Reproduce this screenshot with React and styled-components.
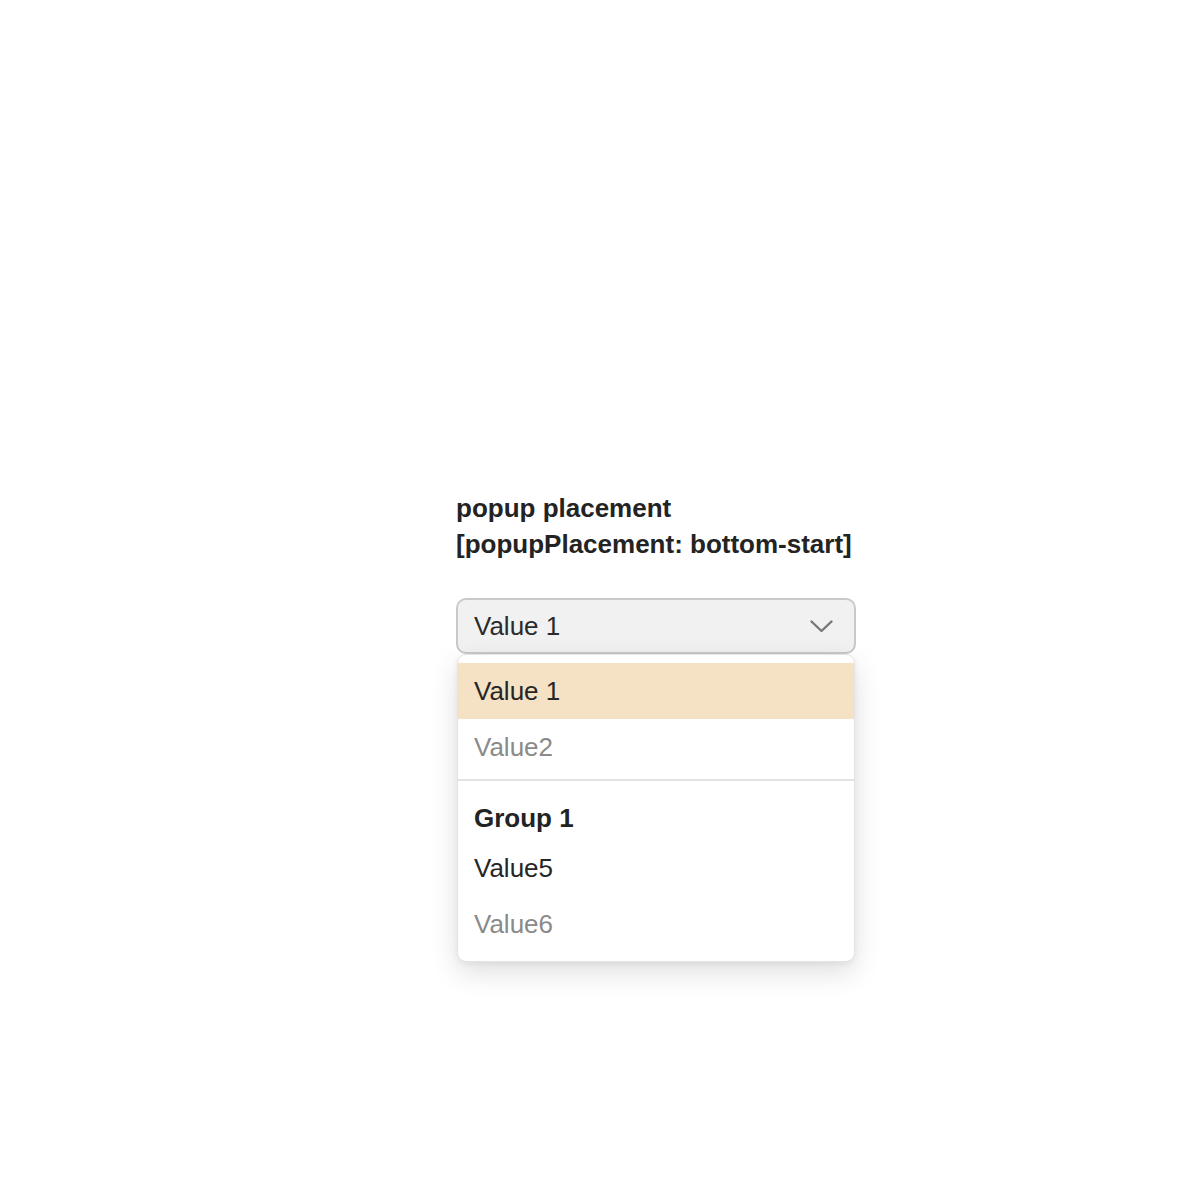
import React from "react";
import styled, { createGlobalStyle } from "styled-components";

const Global = createGlobalStyle`
  html, body { margin: 0; padding: 0; background: #fff; }
  body { font-family: "Liberation Sans", Arial, sans-serif; }
`;

const Page = styled.div`
  width: 1200px;
  height: 1200px;
  box-sizing: border-box;
  padding: 490px 0 0 456px;
`;

const Demo = styled.section`
  width: 400px;
  display: flex;
  flex-direction: column;
`;

const Title = styled.h2`
  margin: 0 0 36px;
  font-size: 26px;
  line-height: 36px;
  font-weight: 700;
  color: #232323;
  white-space: nowrap;
`;

const SelectWrap = styled.div`
  position: relative;
  width: 400px;
`;

const Trigger = styled.button`
  box-sizing: border-box;
  width: 400px;
  height: 56px;
  display: flex;
  align-items: center;
  justify-content: space-between;
  padding: 0 21px 0 16px;
  background: #f1f1f1;
  border: 2px solid #c9c9c9;
  border-radius: 10px;
  font-family: "Liberation Sans", Arial, sans-serif;
  font-size: 26px;
  color: #2b2b2b;
  cursor: pointer;
`;

const Popup = styled.ul`
  position: absolute;
  top: 56px;
  left: 1px;
  box-sizing: border-box;
  width: 398px;
  margin: 0;
  padding: 8px 0 9px;
  list-style: none;
  background: #fff;
  border: 1px solid #e4e4e4;
  border-radius: 9px;
  box-shadow: 0 10px 28px rgba(0, 0, 0, 0.13), 0 2px 6px rgba(0, 0, 0, 0.05);
`;

const Option = styled.li`
  height: 56px;
  display: flex;
  align-items: center;
  padding: 0 16px;
  font-size: 26px;
  color: ${(p) => (p.$muted ? "#8a8a8a" : "#262626")};
  background: ${(p) => (p.$selected ? "#f5e2c5" : "transparent")};
`;

const Divider = styled.li`
  height: 2px;
  margin: 4px 0 0;
  background: #e2e2e2;
`;

const GroupHeader = styled.li`
  height: 43px;
  margin-top: 16px;
  display: flex;
  align-items: center;
  padding: 0 16px;
  font-size: 26px;
  font-weight: 700;
  color: #232323;
`;

const Chevron = () => (
  <svg width="23" height="13" viewBox="0 0 23 13" fill="none">
    <path d="M1.5 1.5 L11.5 11 L21.5 1.5" stroke="#777" strokeWidth="2.4" strokeLinecap="round" strokeLinejoin="round" />
  </svg>
);

export default function App() {
  return (
    <>
      <Global />
      <Page>
        <Demo>
          <Title>
            popup placement
            <br />
            [popupPlacement: bottom-start]
          </Title>
          <SelectWrap>
            <Trigger>
              <span>Value 1</span>
              <Chevron />
            </Trigger>
            <Popup>
              <Option $selected>Value 1</Option>
              <Option $muted>Value2</Option>
              <Divider />
              <GroupHeader>Group 1</GroupHeader>
              <Option>Value5</Option>
              <Option $muted>Value6</Option>
            </Popup>
          </SelectWrap>
        </Demo>
      </Page>
    </>
  );
}
